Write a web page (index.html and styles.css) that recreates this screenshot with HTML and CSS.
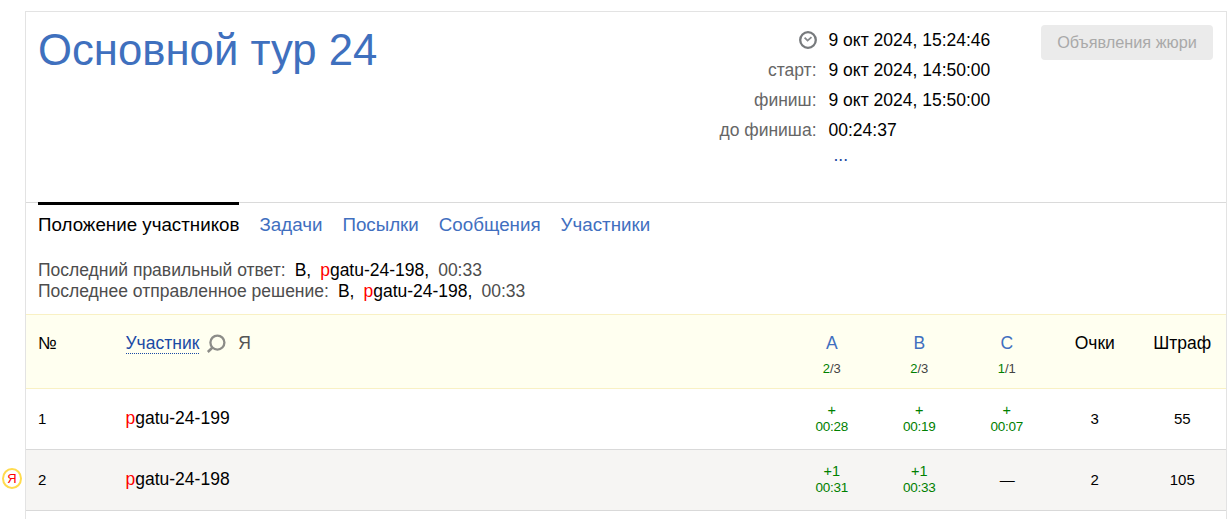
FILE: index.html
```html
<!DOCTYPE html>
<html lang="ru">
<head>
<meta charset="utf-8">
<title>Основной тур 24</title>
<link rel="stylesheet" href="styles.css">
</head>
<body>
<main class="contest">
  <header class="head">
    <h1 class="title">Основной тур 24</h1>
    <dl class="times">
      <dt><svg class="clock" viewBox="0 0 18 18" width="18" height="18"><circle cx="9" cy="9" r="7.8" fill="none" stroke="#777a7d" stroke-width="2.3"/><path d="M5.6 6.6 8.6 9.6 12.5 6.1" fill="none" stroke="#85888b" stroke-width="1.8"/></svg></dt>
      <dd>9 окт 2024, 15:24:46</dd>
      <dt>старт:</dt><dd>9 окт 2024, 14:50:00</dd>
      <dt>финиш:</dt><dd>9 окт 2024, 15:50:00</dd>
      <dt>до финиша:</dt><dd>00:24:37</dd>
      <dt></dt><dd class="more"><a>...</a></dd>
    </dl>
    <button class="jury" disabled>Объявления жюри</button>
  </header>
  <nav class="tabs">
    <a class="tab tab-active">Положение участников</a>
    <a class="tab">Задачи</a>
    <a class="tab">Посылки</a>
    <a class="tab">Сообщения</a>
    <a class="tab">Участники</a>
  </nav>
  <section class="last">
    <p class="last-line"><span>Последний правильный ответ:</span><b>B,</b><b class="user">pgatu-24-198,</b><span>00:33</span></p>
    <p class="last-line"><span>Последнее отправленное решение:</span><b>B,</b><b class="user">pgatu-24-198,</b><span>00:33</span></p>
  </section>
  <section class="table">
    <div class="row row-head">
      <div class="left">№</div>
      <div class="left who"><a class="sort">Участник</a><svg class="search" viewBox="0 0 20 20" width="20" height="20"><circle cx="11.4" cy="8.6" r="7" fill="none" stroke="#8c8c88" stroke-width="2.3"/><path d="M6.5 13.5 1.8 18" fill="none" stroke="#8c8c88" stroke-width="2.5"/></svg><span class="me">Я</span></div>
      <div class="task"><a>A</a><small><i>2</i>/3</small></div>
      <div class="task"><a>B</a><small><i>2</i>/3</small></div>
      <div class="task"><a>C</a><small><i>1</i>/1</small></div>
      <div>Очки</div>
      <div class="fine">Штраф</div>
    </div>
    <div class="row">
      <div class="left num">1</div>
      <div class="left user">pgatu-24-199</div>
      <div class="ok"><span>+</span><small>00:28</small></div>
      <div class="ok"><span>+</span><small>00:19</small></div>
      <div class="ok"><span>+</span><small>00:07</small></div>
      <div class="num">3</div>
      <div class="num">55</div>
    </div>
    <div class="row row-me">
      <span class="badge">Я</span>
      <div class="left num">2</div>
      <div class="left user">pgatu-24-198</div>
      <div class="ok"><span>+1</span><small>00:31</small></div>
      <div class="ok"><span>+1</span><small>00:33</small></div>
      <div class="num">—</div>
      <div class="num">2</div>
      <div class="num">105</div>
    </div>
  </section>
</main>
</body>
</html>
```
FILE: styles.css
```css
* { box-sizing: border-box; }
body { margin: 0; padding: 11px 3px 0 25px; height: 519px; overflow: hidden; background: #fff; font-family: "Liberation Sans", Arial, sans-serif; font-size: 17.5px; line-height: 21px; color: #000; }
.contest { height: 508px; border: 1px solid #e3e3e3; border-bottom: 0; }
.head { display: flex; align-items: flex-start; height: 190px; padding: 13px 13px 0 12px; }
.title { margin: -1px 0 0; flex: 1; font-size: 43.7px; line-height: 52px; font-weight: 400; color: #3f70be; }
.times { display: grid; grid-template-columns: auto 162.5px; column-gap: 12px; grid-auto-rows: 30px; margin: 0 50px 0 0; line-height: 30px; white-space: nowrap; }
.times dt { text-align: right; color: #666; }
.times dd { margin: 0; }
.clock { display: block; margin: 6px 0 0 auto; }
.times .more { padding-left: 5px; line-height: 21px; color: #2148a0; }
.jury { width: 172px; height: 35px; padding: 0; border: 0; border-radius: 4px; background: #ebebeb; color: #a9a9a9; font: inherit; font-size: 16.25px; }
.tabs { display: flex; gap: 20px; height: 58px; padding: 0 12px; border-top: 1px solid #dadada; font-size: 18.75px; }
.tab { margin-top: -1px; padding-top: 12px; height: 40px; color: #416fbf; }
.tab-active { border-top: 3px solid #000; padding-top: 9px; color: #000; }
.last { height: 54px; padding-left: 12px; }
.last-line { display: flex; gap: 9px; margin: 0; color: #4d4d4d; }
.last-line b { font-weight: 400; color: #000; }
.user::first-letter { color: #f00; }
.row { position: relative; display: grid; grid-template-columns: 99.5px 1fr repeat(5, 87.5px); height: 61px; border-bottom: 1px solid #d9d9d9; text-align: center; line-height: 58px; }
.left { text-align: left; }
.row > .left:first-of-type { padding-left: 12px; }
.row-head { height: 75px; border-top: 1px solid #f9f1c4; border-bottom-color: #f9f1c4; background: #fffff0; line-height: 56px; }
.who { display: flex; align-items: flex-start; }
.sort { margin-top: 18px; line-height: 20px; border-bottom: 1px dotted #1a4aa5; color: #1a4aa5; }
.search { margin: 19px 0 0 7px; }
.me { margin-left: 12px; color: #555; }
.task a { display: block; height: 46px; color: #416fbf; }
.task small { display: block; font-size: 13px; line-height: 16px; color: #444; }
.task i { font-style: normal; color: #008000; }
.task, .ok { padding-right: 1px; }
.num { font-size: 15px; line-height: 60px; }
.ok { padding-top: 13px; color: #008000; font-size: 14.5px; line-height: 16px; }
.ok span, .ok small { display: block; }
.ok small { font-size: 13.5px; line-height: 17px; letter-spacing: -0.3px; }
.row-me { background: #f6f5f3; }
.badge { position: absolute; left: -24px; top: 18px; width: 20px; height: 21px; border: 2px solid #ffdb4d; border-radius: 50%; background: #fff; color: #f00; font-size: 13px; line-height: 18px; }
```
